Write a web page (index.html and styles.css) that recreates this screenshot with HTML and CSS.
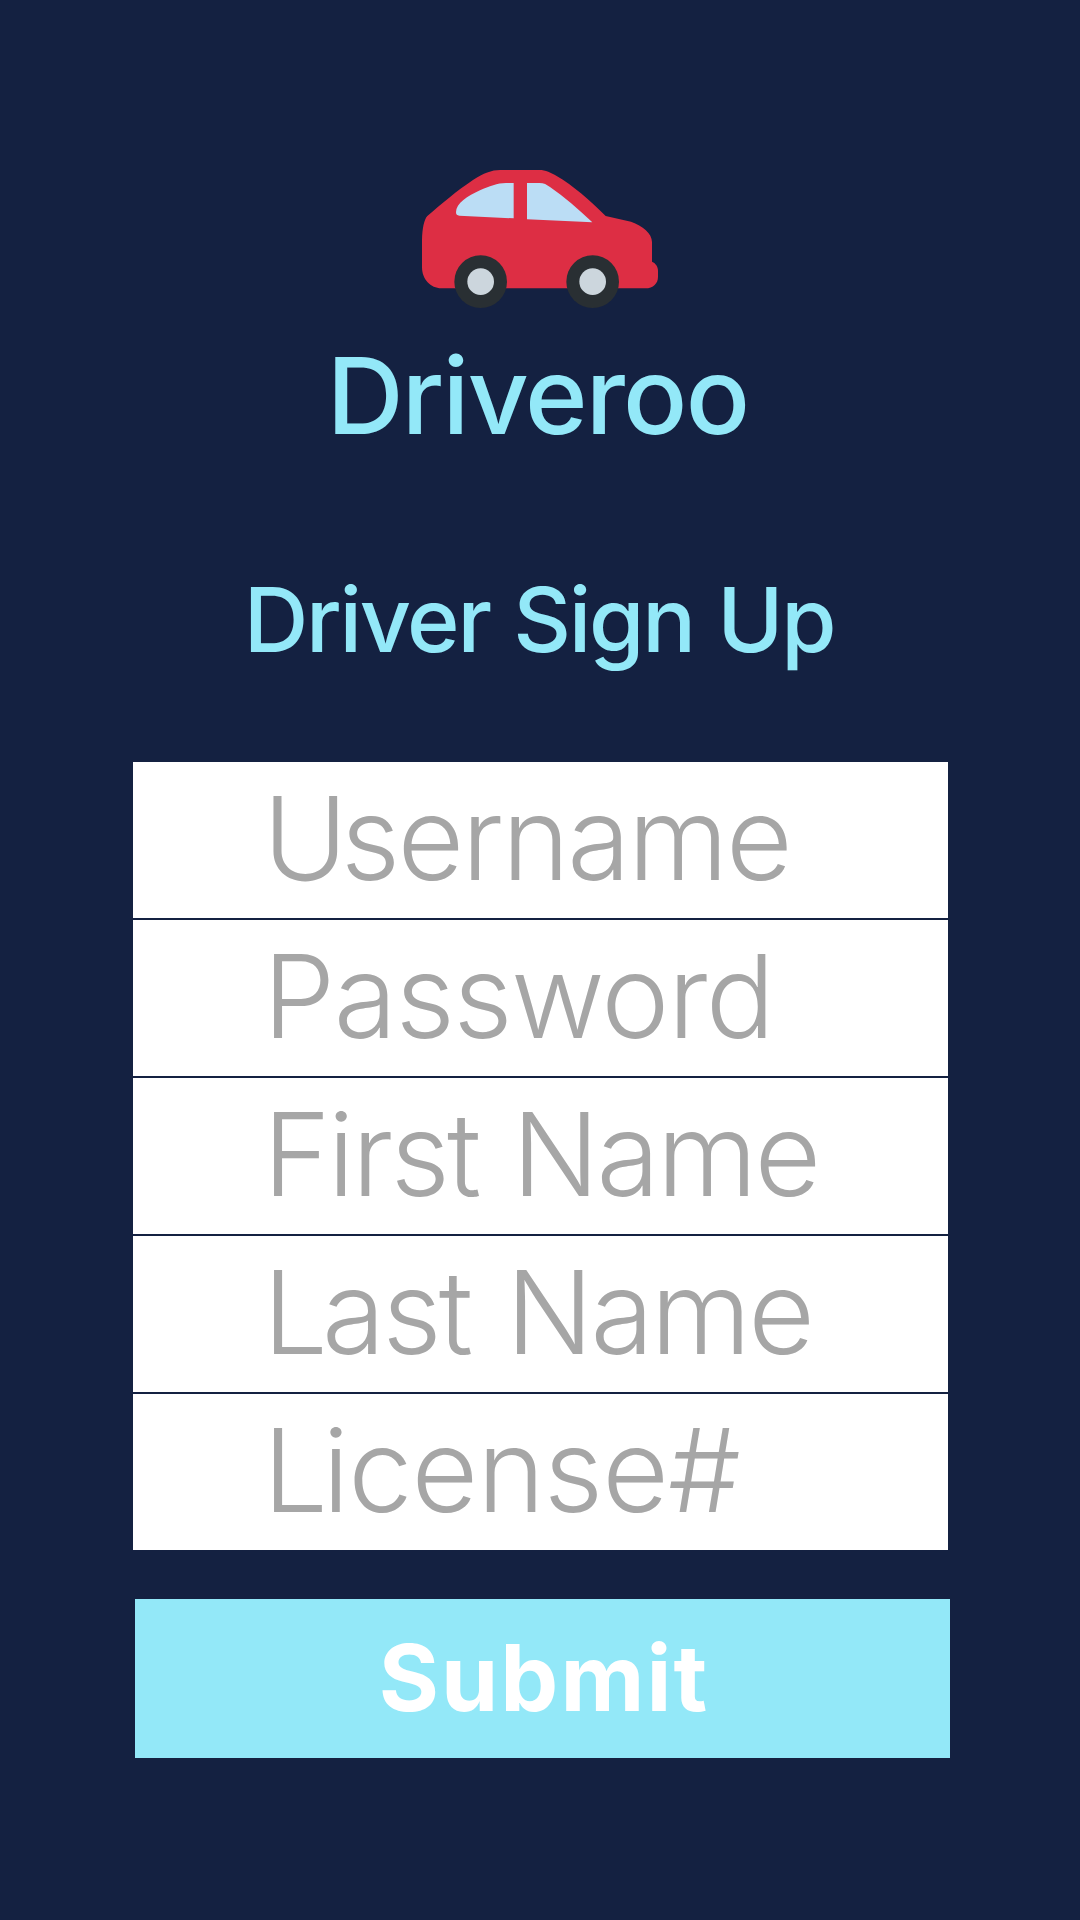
FILE: index.html
```html
<!DOCTYPE html>
<html lang="en">
<head>
<meta charset="utf-8">
<title>Driveroo – Driver Sign Up</title>
<link rel="stylesheet" href="styles.css">
</head>
<body>
<main class="screen">
  <svg class="logo" viewBox="0 0 840 510" aria-hidden="true">
    <path fill="#dd2e44" d="M300 60H418C437 60 453 68 470 78C520 107 568 150 617 198L693 215C728 228 756 250 756 276V335C768 340 774 351 774 363V380C774 400 760 415 736 415H124C92 415 66 388 66 352V270C67 235 72 209 82 198C125 161 168 124 220 89C250 70 275 60 300 60Z"/>
    <path fill="#bbddf5" d="M341 99H318C292 99 268 109 240 121C203 138 168 160 168 187Q168 197 178 197L341 205ZM381 99H418C432 99 440 104 450 111C493 140 534 177 577 217L381 208Z"/>
    <circle cx="242" cy="395" r="79" fill="#292f33"/>
    <circle cx="578" cy="395" r="79" fill="#292f33"/>
    <circle cx="242" cy="395" r="40" fill="#ccd6dd"/>
    <circle cx="578" cy="395" r="40" fill="#ccd6dd"/>
  </svg>
  <h1 class="brand">Driveroo</h1>
  <h2 class="title">Driver Sign Up</h2>
  <form class="form">
    <div class="fields">
      <label class="field username">Username</label>
      <label class="field password">Password</label>
      <label class="field first-name">First Name</label>
      <label class="field last-name">Last Name</label>
      <label class="field license">License#</label>
    </div>
    <button class="submit" type="button">Submit</button>
  </form>
</main>
</body>
</html>
```
FILE: styles.css
```css
* { box-sizing: border-box; }

body {
  margin: 0;
  background: #142141;
  font-family: Inter, sans-serif;
}

.screen {
  display: flex;
  flex-direction: column;
  align-items: center;
  height: 1920px;
  padding-top: 150px;
}

.logo {
  display: block;
  width: 280px;
  height: 170px;
}

.brand {
  margin: 12px 0 0;
  padding-right: 5px;
  color: #93e8f8;
  font-size: 106.5px;
  font-weight: 540;
  line-height: 128px;
  letter-spacing: -1.8px;
}

.title {
  margin: 96px 0 0;
  padding-right: 2px;
  color: #93e8f8;
  font-size: 89.5px;
  font-weight: 530;
  line-height: 128px;
  letter-spacing: -2.3px;
  word-spacing: 2px;
}

.form {
  width: 815px;
  margin-top: 78px;
  align-self: flex-start;
  margin-left: 133px;
}

.fields {
  display: grid;
  gap: 2px;
}

.field {
  height: 156px;
  padding-left: 130px;
  background: #fff;
  color: #a6a6a6;
  font-size: 115px;
  font-weight: 300;
  line-height: 153px;
  white-space: nowrap;
}

.username { letter-spacing: -2.4px; }
.username::first-letter { letter-spacing: -7px; }
.password { letter-spacing: -1.5px; }
.first-name { letter-spacing: -2.8px; word-spacing: 4px; }
.last-name { letter-spacing: -2.8px; word-spacing: 6px; }
.last-name::first-letter { letter-spacing: -6px; }
.license { letter-spacing: -1px; }
.license::first-letter { letter-spacing: -5.5px; }

.submit {
  display: block;
  width: 815px;
  height: 159px;
  margin: 49px 0 0 2px;
  padding: 0 0 2px 3px;
  border: 0;
  background: #93e8f8;
  color: #fff;
  font-family: inherit;
  font-size: 92px;
  font-weight: 670;
  line-height: 157px;
  letter-spacing: 2.1px;
}
```
